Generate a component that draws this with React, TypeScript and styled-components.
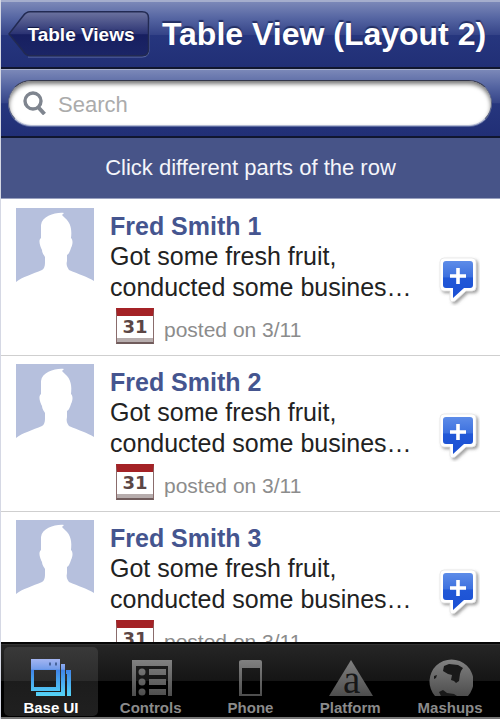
import React, { useState } from "react";
import styled, { createGlobalStyle, css } from "styled-components";

const GlobalStyle = createGlobalStyle`
  * { box-sizing: border-box; }
  body {
    margin: 0;
    background: #fff;
    font-family: "Liberation Sans", Arial, Helvetica, sans-serif;
  }
  button, input { font-family: inherit; }
`;

const barGradient = css`
  background: linear-gradient(#7b88b8 0%, #5565a2 25%, #354488 50%, #26367e 51%, #212f76 100%);
  border-top: 2px solid #a5aecd;
  border-bottom: 2px solid #10162f;
`;

const Screen = styled.div`
  height: 100vh;
  display: flex;
  flex-direction: column;
  border-left: 1px solid #d5d8e4;
  border-right: 1px solid #fff;
  overflow: hidden;
`;

const Header = styled.header`
  ${barGradient}
  flex: none;
  height: 69px;
  display: flex;
  align-items: center;
  gap: 8px;
  padding: 0 10px 0 7px;
`;

const BackButton = styled.button`
  position: relative;
  flex: none;
  width: 142px;
  height: 48px;
  padding: 0 0 0 4px;
  border: 0;
  background: none;
  color: #fff;
  font-size: 19px;
  font-weight: bold;
  text-shadow: 0 -1px 1px #10163f;
  cursor: pointer;
`;

const BackShape = styled.svg`
  position: absolute;
  inset: 0;
  width: 100%;
  height: 100%;
`;

const BackLabel = styled.span`
  position: relative;
`;

const Title = styled.h1`
  flex: 1;
  margin: 0;
  color: #fff;
  font-size: 32px;
  line-height: 40px;
  padding-bottom: 2px;
  text-align: center;
  white-space: nowrap;
  text-shadow: 0 -2px 1px #243064;
`;

const SearchBar = styled.form`
  ${barGradient}
  border-top-width: 1px;
  flex: none;
  height: 69px;
  display: flex;
  align-items: center;
  padding: 0 8px 0 7px;
`;

const SearchField = styled.label`
  flex: 1;
  height: 46px;
  display: flex;
  align-items: center;
  gap: 12px;
  padding: 0 16px 0 14px;
  border: 1px solid #59617f;
  border-top-color: #33364a;
  border-bottom-color: #b4bbd4;
  border-radius: 24px;
  background: #fff;
  box-shadow: inset 0 3px 4px #777, 0 1px 0 #5c6a9f;
`;

const SearchInput = styled.input`
  flex: 1;
  min-width: 0;
  padding: 4px 0 0;
  border: 0;
  outline: 0;
  background: none;
  color: #222;
  font-size: 22px;
  &::placeholder { color: #ababab; opacity: 1; }
`;

const Banner = styled.p`
  flex: none;
  margin: 0;
  height: 61px;
  border-bottom: 1px solid #98a0bf;
  background: #475488;
  color: #f4f5fa;
  font-size: 22px;
  line-height: 60px;
  text-align: center;
`;

const List = styled.ul`
  flex: 1;
  min-height: 0;
  margin: 0;
  padding: 0;
  overflow: hidden;
  list-style: none;
`;

const Row = styled.li`
  height: 156px;
  display: flex;
  align-items: flex-start;
  padding: 8px 20px 0 15px;
  border-top: 1px solid #cfcfcf;
  &:first-child { border-top-color: transparent; }
`;

const Avatar = styled.svg`
  flex: none;
  width: 78px;
  height: 75px;
  margin-right: 16px;
`;

const Content = styled.div`
  flex: 1;
  min-width: 0;
`;

const Name = styled.h2`
  margin: 3px 0 0;
  color: #45558f;
  font-size: 25px;
  line-height: 30px;
`;

const Message = styled.p`
  margin: 0;
  color: #222;
  font-size: 25px;
  line-height: 31px;
  white-space: pre;
`;

const Posted = styled.div`
  display: flex;
  align-items: center;
  gap: 10px;
  margin: 5px 0 0 6px;
  color: #8c8c8c;
  font-size: 21px;
  line-height: 28px;
`;

const PostedText = styled.span`
  padding-top: 8px;
`;

const Calendar = styled.span`
  width: 38px;
  height: 36px;
  border: 1px solid #8a6c6c;
  border-top: 8px solid #a42226;
  border-bottom: 2px solid #705c5c;
  background: linear-gradient(#fff 84%, #b7adad 85%);
  color: #5b4645;
  font: bold 18px/22px "DejaVu Sans", sans-serif;
  text-align: center;
`;

const AddButton = styled.button`
  flex: none;
  margin-top: 48px;
  width: 42px;
  height: 50px;
  padding: 0;
  border: 0;
  background: none;
  cursor: pointer;
`;

const TabBar = styled.nav`
  flex: none;
  height: 77px;
  display: grid;
  grid-template-columns: repeat(5, 1fr);
  border-top: 2px solid #060606;
  border-bottom: 2px solid #777;
  background: linear-gradient(#262626 0%, #151515 50%, #000 51%, #000 100%);
  box-shadow: inset 0 1px 0 #333;
`;

const Tab = styled.button<{ $active: boolean }>`
  display: flex;
  flex-direction: column;
  align-items: center;
  margin: 3px;
  padding: 10px 0 0;
  border: 0;
  border-radius: 5px;
  background: ${(p) => (p.$active ? "linear-gradient(#393939 0%, #2b2b2b 49%, #1c1c1c 50%, #202020 100%)" : "none")};
  color: ${(p) => (p.$active ? "#fff" : "#8b8b8b")};
  font-size: 15px;
  font-weight: bold;
  line-height: 17px;
  cursor: pointer;
`;

const TabIcon = styled.svg`
  flex: none;
  width: 46px;
  height: 40px;
  margin-bottom: 2px;
`;

const GlyphText = styled.text`
  font-family: "Liberation Serif", serif;
  font-size: 39px;
  font-weight: normal;
`;

function PersonPicture() {
  return (
    <Avatar viewBox="0 0 78 75" aria-hidden="true">
      <path
        fill="#b6c0dd"
        d="M0 0H78V73C72 69 62 66 53 62C51 59 50 57 51 53V47C53 46 54 43 55 40C57 36 57 32 55 30C56 22 55 15 49 10L46 7L48 5C40 4 26 8 25 17V30C22 32 24 38 26 42C26 45 28 47 29 49V55C29 58 28 61 26 62C17 66 6 69 0 74Z"
      />
    </Avatar>
  );
}

function AddIcon() {
  return (
    <svg width="42" height="50" viewBox="0 0 42 50" aria-hidden="true">
      <defs>
        <linearGradient id="bubble" x1="0" y1="0" x2="0" y2="1">
          <stop offset="0" stopColor="#5d8ce8" />
          <stop offset=".44" stopColor="#3c70df" />
          <stop offset=".45" stopColor="#2158d7" />
          <stop offset="1" stopColor="#1a4fd4" />
        </linearGradient>
        <filter id="bubbleShadow" x="-20%" y="-20%" width="150%" height="150%">
          <feDropShadow dx="2" dy="2" stdDeviation="1.6" floodColor="#555" floodOpacity=".55" />
        </filter>
      </defs>
      <path
        filter="url(#bubbleShadow)"
        fill="#fff"
        stroke="#dcdcdc"
        strokeWidth=".6"
        d="M6 2H34Q38 2 38 6V31Q38 35 34 35H28L17 45Q12 47 12 43V35H6Q2 35 2 31V6Q2 2 6 2Z"
      />
      <path
        fill="url(#bubble)"
        d="M8 5H32Q35 5 35 8V29Q35 32 32 32H26L15 42V32H8Q5 32 5 29V8Q5 5 8 5Z"
      />
      <path stroke="#fff" strokeWidth="3.6" d="M12 20H28M20 12V28" />
    </svg>
  );
}

function WindowsIcon() {
  return (
    <TabIcon viewBox="0 0 46 40" aria-hidden="true">
      <defs>
        <linearGradient id="blue" gradientUnits="userSpaceOnUse" x1="0" y1="1" x2="0" y2="39">
          <stop offset="0" stopColor="#a9b8f2" />
          <stop offset=".3" stopColor="#719bea" />
          <stop offset=".31" stopColor="#3f83e8" />
          <stop offset="1" stopColor="#55d5f7" />
        </linearGradient>
      </defs>
      <path fill="url(#blue)" d="M38 13H43V39H39V17H38Z" />
      <path fill="url(#blue)" d="M33 7H37V39H8V35H33Z" />
      <path fill="url(#blue)" fillRule="evenodd" d="M3 2H32V34H3ZM6 13V30H28V13Z" />
      <path stroke="#48649b" strokeWidth="3" d="M21 7H23M27 7H29" />
    </TabIcon>
  );
}

function GreyFill({ id }: { id: string }) {
  return (
    <defs>
      <linearGradient id={id} gradientUnits="userSpaceOnUse" x1="0" y1="0" x2="0" y2="40">
        <stop offset="0" stopColor="#858585" />
        <stop offset="1" stopColor="#4c4c4c" />
      </linearGradient>
    </defs>
  );
}

function ControlsIcon() {
  return (
    <TabIcon viewBox="0 0 46 40" aria-hidden="true">
      <GreyFill id="greyControls" />
      <g fill="url(#greyControls)">
        <path fillRule="evenodd" d="M4 3H44V39H4ZM8 9V39H40V9Z" />
        <circle cx="14" cy="15" r="3.5" />
        <circle cx="14" cy="25" r="3.5" />
        <circle cx="14" cy="35" r="3.5" />
        <path d="M21 12H38V18H21ZM21 22H38V28H21ZM21 32H38V38H21Z" />
      </g>
    </TabIcon>
  );
}

function PhoneIcon() {
  return (
    <TabIcon viewBox="0 0 46 40" aria-hidden="true">
      <GreyFill id="greyPhone" />
      <path
        fill="url(#greyPhone)"
        fillRule="evenodd"
        d="M15 3H33Q35 3 35 5V39H12V5Q12 3 15 3ZM15 11V37H33V11Z"
      />
    </TabIcon>
  );
}

function PlatformIcon() {
  return (
    <TabIcon viewBox="0 0 46 40" aria-hidden="true">
      <GreyFill id="greyPlatform" />
      <path fill="url(#greyPlatform)" d="M24 3L46 39H2Z" />
      <GlyphText x="16" y="36" fill="#171717">a</GlyphText>
    </TabIcon>
  );
}

function GlobeIcon() {
  return (
    <TabIcon viewBox="0 0 46 40" aria-hidden="true">
      <GreyFill id="greyGlobe" />
      <path fill="url(#greyGlobe)" d="M8 39A22 22 0 1 1 41 39Z" />
      <path
        fill="#191919"
        d="M17 9L22 7L31 8L36 11L34 14L33 17L32 24L29 26L27 24L24 23L25 18L21 17L16 14ZM7 19L10 18L9 21L7 22ZM12 35L16 33L20 36L27 37L30 39H14Z"
      />
    </TabIcon>
  );
}

const people = ["Fred Smith 1", "Fred Smith 2", "Fred Smith 3"];

const tabs = [
  { label: "Base UI", Icon: WindowsIcon },
  { label: "Controls", Icon: ControlsIcon },
  { label: "Phone", Icon: PhoneIcon },
  { label: "Platform", Icon: PlatformIcon },
  { label: "Mashups", Icon: GlobeIcon },
];

export default function App() {
  const [active, setActive] = useState("Base UI");
  return (
    <Screen>
      <GlobalStyle />
      <Header>
        <BackButton type="button">
          <BackShape viewBox="0 0 142 48" preserveAspectRatio="none" aria-hidden="true">
            <defs>
              <linearGradient id="back" x1="0" y1="0" x2="0" y2="1">
                <stop offset="0" stopColor="#6c739f" />
                <stop offset=".5" stopColor="#2b3373" />
                <stop offset=".52" stopColor="#171f60" />
                <stop offset="1" stopColor="#1b2566" />
              </linearGradient>
            </defs>
            <path fill="none" stroke="#6270a8" d="M20 46H134Q141 46 141 39V8" />
            <path
              fill="url(#back)"
              stroke="#222a52"
              strokeWidth="1.5"
              d="M22 .8H134Q140.500 .8 140.500 7V38Q140.500 44.800 134 44.800H22Q18 44.800 15 40L1 23L15 5Q18 .8 22 .8Z"
            />
          </BackShape>
          <BackLabel>Table Views</BackLabel>
        </BackButton>
        <Title>Table View (Layout 2)</Title>
      </Header>
      <SearchBar role="search" onSubmit={(e) => e.preventDefault()}>
        <SearchField>
          <svg width="23" height="24" viewBox="0 0 23 24" aria-hidden="true">
            <circle cx="10" cy="10" r="8" fill="none" stroke="#7f858f" strokeWidth="3.4" />
            <path d="M15 16L21.500 23" stroke="#7f858f" strokeWidth="4" />
          </svg>
          <SearchInput type="text" placeholder="Search" aria-label="Search" />
        </SearchField>
      </SearchBar>
      <Banner>Click different parts of the row</Banner>
      <List>
        {people.map((name) => (
          <Row key={name}>
            <PersonPicture />
            <Content>
              <Name>{name}</Name>
              <Message>{"Got some fresh fruit,\nconducted some busines…"}</Message>
              <Posted>
                <Calendar>31</Calendar>
                <PostedText>posted on 3/11</PostedText>
              </Posted>
            </Content>
            <AddButton type="button" aria-label={`Add comment for ${name}`}>
              <AddIcon />
            </AddButton>
          </Row>
        ))}
      </List>
      <TabBar>
        {tabs.map(({ label, Icon }) => (
          <Tab key={label} type="button" $active={label === active} onClick={() => setActive(label)}>
            <Icon />
            {label}
          </Tab>
        ))}
      </TabBar>
    </Screen>
  );
}
